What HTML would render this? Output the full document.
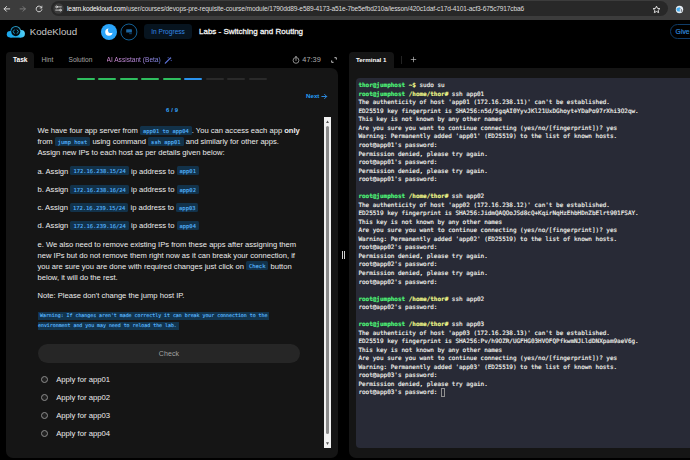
<!DOCTYPE html>
<html lang="en">
<head>
<meta charset="utf-8">
<title>Labs - Switching and Routing</title>
<style>
*{box-sizing:border-box;margin:0;padding:0}
html,body{width:690px;height:460px;overflow:hidden;background:#000}
body{position:relative;font-family:"Liberation Sans",sans-serif;color:#e6e6e6}
.abs{position:absolute;white-space:nowrap}
/* browser chrome */
#chrome{position:absolute;left:0;top:0;width:690px;height:19.5px;background:#3c3c3c}
#urlpill{position:absolute;left:51px;top:1.2px;width:616.6px;height:15px;border-radius:7.5px;background:#282828}
#url{position:absolute;left:67px;top:4.3px;font-size:6.6px;line-height:9px;color:#dedede}
#url b{font-weight:400;color:#fff}
/* header */
#brand{left:29.7px;top:23.6px;font-size:9.7px;line-height:15px;color:#c9c9c9;letter-spacing:0}
.pill{position:absolute;border-radius:4px}
#inprog{left:144.3px;top:24.4px;width:47.5px;height:15px;background:#07141f;border-radius:3.5px;color:#3388e6;font-size:6.6px;line-height:15px;text-align:center}
#title{left:199px;top:25px;font-size:8px;line-height:13px;color:#f6f6f6;font-weight:400;letter-spacing:0;-webkit-text-stroke:.28px #f6f6f6}
#give{position:absolute;left:670px;top:24.4px;width:40px;height:15px;border:.8px solid #0f3c68;border-radius:7.5px;color:#2f86d8;font-size:6.8px;line-height:13.6px;padding-left:4.6px;font-weight:400;-webkit-text-stroke:.2px #2f86d8}
/* left panel */
#ltab{position:absolute;left:6px;top:52px;width:28px;height:18px;background:#151515;border-radius:4px 4px 0 0}
#lpanel{position:absolute;left:6px;top:68px;width:332px;height:390px;background:#151515;border-radius:0 7px 7px 7px}
.tab{font-size:6.6px;line-height:9px;top:55px;color:#a8a8a8}
.seg{position:absolute;top:78.2px;height:2px;width:18px;border-radius:1px}
.p{position:absolute;left:37.5px;white-space:nowrap;font-size:7.6px;line-height:11px;color:#ececec}
code{font-family:"DejaVu Sans Mono","Liberation Mono",monospace;font-size:5.45px;background:#12324a;color:#58b8ff;-webkit-text-stroke:.12px currentColor;padding:1.5px 3px 1.5px 3px;border-radius:1.5px;vertical-align:.6px;letter-spacing:0}
#warn1,#warn2{position:absolute;left:38px;font-family:"DejaVu Sans Mono","Liberation Mono",monospace;font-size:4.92px;line-height:7.8px;height:7.7px;color:#5cbaff;background:#12344d;padding:0 1.5px;white-space:pre;-webkit-text-stroke:.13px currentColor}
#check{position:absolute;left:38px;top:344.4px;width:262px;height:19px;border-radius:9.5px;background:#262626;color:#a2a2a2;font-size:7px;line-height:20.2px;text-align:center;letter-spacing:.1px}
.radio{position:absolute;left:41px;width:7px;height:7px;border-radius:50%;border:1.2px solid #8d8d8d;background:#222}
.rl{position:absolute;left:56.2px;font-size:7.7px;line-height:11px;color:#ececec;white-space:nowrap}
/* scrollbar */
#sbtrack{position:absolute;left:324px;top:116.7px;width:7px;height:331.3px;background:#f1f1f1}
#sbthumb{position:absolute;left:326px;top:126px;width:3px;height:307.5px;background:#8b8b8b;border-radius:1.5px}
/* splitter */
#split{position:absolute;left:342px;top:250.6px;width:3px;height:8px;border-left:1px solid #cfcfcf;border-right:1px solid #cfcfcf}
/* right panel */
#rtab{position:absolute;left:349px;top:52.2px;width:45px;height:18px;background:#151515;border-radius:4px 4px 0 0}
#rpanel{position:absolute;left:349px;top:68px;width:345px;height:390px;background:#151515;border-radius:0 0 0 7px}
#term{position:absolute;left:356px;top:78.4px;width:340px;height:369.6px;background:#282a36;border-radius:4px 0 0 4px}
#term pre{position:absolute;left:2.4px;top:2.9px;font-family:"DejaVu Sans Mono","Liberation Mono",monospace;font-size:5.97px;line-height:8.536px;color:#f8f8f2;-webkit-text-stroke:.14px currentColor;white-space:pre}
.g{color:#50fa7b;font-weight:700}.y{color:#f1fa8c;font-weight:700}
</style>
</head>
<body>
<div id="chrome">
  <div id="urlpill"></div>
  <svg class="abs" style="left:0;top:0" width="52" height="19" viewBox="0 0 52 19">
    <g fill="none" stroke="#d6d6d6" stroke-width="1" stroke-linecap="round" stroke-linejoin="round">
      <path d="M9.7 8.9H4.2M6.5 6.5L4.1 8.9L6.5 11.3"/>
      <path d="M20.1 8.9h5.2M23 6.6l2.3 2.3-2.3 2.3" stroke="#7a7a7a"/>
      <path d="M41.5 7.3A2.9 2.9 0 1 0 41.9 9.7"/>
      <path d="M42.1 6v2.2h-2.2z" fill="#d6d6d6" stroke-width=".3"/>
    </g>
  </svg>
  <svg class="abs" style="left:52.5px;top:3.3px" width="11" height="11" viewBox="0 0 11 11">
    <circle cx="5.5" cy="5.5" r="5.2" fill="#3d3d3d"/>
    <g stroke="#f0f0f0" stroke-width=".75" fill="none" stroke-linecap="round"><path d="M5.2 3.9h3.1M2.7 7.1h3.1"/><circle cx="3.6" cy="3.9" r=".9"/><circle cx="7.4" cy="7.1" r=".9"/></g>
  </svg>
  <div id="url" class="abs"><b style="letter-spacing:-.119px">learn.kodekloud.com</b><span style="letter-spacing:-.104px">/user/courses/devops-pre-requisite-course/module/</span><span style="letter-spacing:-.162px">1790dd89-e589-4173-a51e-7be5efbd210a/lesson/420c1daf-c17d-4101-acf3-675c7917cba6</span></div>
  <svg class="abs" style="left:652.2px;top:4.6px" width="9" height="9" viewBox="0 0 10 10"><path d="M5 1.3l1.150 2.450 2.650.3-1.950 1.8.55 2.650L5 7.2 2.6 8.5l.55-2.650-1.950-1.8 2.650-.3z" fill="none" stroke="#ededed" stroke-width="1" stroke-linejoin="round"/></svg>
  <svg class="abs" style="left:675px;top:4.8px" width="9" height="9" viewBox="0 0 9 9"><circle cx="4.5" cy="4.5" r="3.7" fill="#e6edf3"/><path d="M1.7 5.3a1.7 1.7 0 0 1 1.4-2.6 1.8 1.8 0 0 1 2.3.3L4.6 5l.8 1.4H3A1.5 1.5 0 0 1 1.7 5.3z" fill="#46aef0"/><path d="M5.6 3.6l1.4 1.7-.9.3.5 1.3" fill="none" stroke="#3a3f46" stroke-width=".6"/></svg>
</div>

<!-- header -->
<svg class="abs" style="left:5px;top:23px" width="24" height="18" viewBox="0 0 24 18">
  <defs><linearGradient id="cg" gradientUnits="userSpaceOnUse" x1="2" y1="14" x2="20" y2="6"><stop offset="0" stop-color="#1aa3ea"/><stop offset=".5" stop-color="#22b4ee"/><stop offset="1" stop-color="#63d6f6"/></linearGradient></defs>
  <g fill="url(#cg)">
    <circle cx="10.75" cy="8.4" r="5.4" opacity=".8"/>
    <ellipse cx="5.3" cy="11.3" rx="3.5" ry="3.3"/>
    <ellipse cx="16.3" cy="10.8" rx="3.6" ry="3.8"/>
    <rect x="5.3" y="11" width="10.9" height="3.6"/>
  </g>
  <circle cx="10.75" cy="8.6" r="4.55" fill="#020a10"/>
  <path d="M9.3 7L8.1 8.7 9.3 10.4M12.2 7l1.2 1.7-1.2 1.7" fill="none" stroke="#22b6ea" stroke-width=".8" stroke-linecap="round" stroke-linejoin="round"/>
</svg>
<div id="brand" class="abs">KodeKloud</div>
<svg class="abs" style="left:100px;top:21.6px" width="40" height="20" viewBox="0 0 40 20">
  <defs><mask id="mm"><rect width="40" height="20" fill="#fff"/><circle cx="10.9" cy="8.2" r="2.9" fill="#000"/></mask></defs>
  <circle cx="9" cy="10" r="8" fill="#2aa4f9"/>
  <circle cx="8.9" cy="10.1" r="3.7" fill="#fff" mask="url(#mm)"/>
  <circle cx="28.9" cy="10" r="8" fill="#010203" stroke="#1878bd" stroke-width=".8"/>
  <rect x="26.2" y="7.3" width="5.7" height="3.3" rx=".4" fill="#1d67a3"/>
  <path d="M29.2 11.7h2.6" stroke="#1d67a3" stroke-width=".7"/>
</svg>
<div id="inprog" class="abs">In Progress</div>
<div id="title" class="abs">Labs - Switching and Routing</div>
<div id="give">Give</div>

<!-- left panel -->
<div id="ltab"></div>
<div id="lpanel"></div>
<div class="abs tab" style="left:13px;color:#fff;font-weight:700">Task</div>
<div class="abs tab" style="left:41.5px">Hint</div>
<div class="abs tab" style="left:68.5px">Solution</div>
<div class="abs tab" style="left:106.5px;color:transparent;background:linear-gradient(90deg,#dc92dc 0%,#bd8ee4 55%,#7d8cf0 100%);-webkit-background-clip:text;background-clip:text">AI Assistant (Beta)</div>
<svg class="abs" style="left:163.5px;top:55.5px" width="9" height="9" viewBox="0 0 9 9"><path d="M1.3 7.1l4.5-4.5" stroke="#5c72d8" stroke-width="1.3" stroke-linecap="round"/><path d="M6.4.7l.35 1 .95.350-.95.350-.35 1-.35-1-.95-.35.950-.35z" fill="#6a7fe2"/><path d="M4.2 1.1v1.2M3.6 1.7h1.2M7.3 3.9v1.2M6.7 4.5h1.2" stroke="#4f63c4" stroke-width=".5"/></svg>
<svg class="abs" style="left:290.7px;top:54.6px" width="10" height="10" viewBox="0 0 10 10"><circle cx="5" cy="5.4" r="2.9" fill="none" stroke="#c6c6c6" stroke-width=".7"/><path d="M5 3.5v2M4.4 1.7h1.2" stroke="#c6c6c6" stroke-width=".7" stroke-linecap="round"/></svg>
<div class="abs" style="left:302.3px;top:54.6px;font-size:7.4px;line-height:10px;color:#adadad">47:39</div>
<svg class="abs" style="left:330.6px;top:56.8px" width="6" height="6" viewBox="0 0 7 7"><path d="M4 .8h2.2v2.2M3 6.2H.8V4" fill="none" stroke="#cdcdcd" stroke-width="1.1"/></svg>

<div class="seg" style="left:76.5px;background:#2fbf5f"></div>
<div class="seg" style="left:98px;background:#2fbf5f"></div>
<div class="seg" style="left:119.5px;background:#2fbf5f"></div>
<div class="seg" style="left:141px;background:#2fbf5f"></div>
<div class="seg" style="left:162.5px;background:#2fbf5f"></div>
<div class="seg" style="left:184px;background:#2a93ee"></div>
<div class="seg" style="left:205.5px;background:#2a2a2a"></div>
<div class="seg" style="left:227px;background:#2a2a2a"></div>
<div class="seg" style="left:248.5px;background:#2a2a2a"></div>

<div class="abs" style="left:306px;top:91px;font-size:6.2px;line-height:9px;color:#249cf6;font-weight:700">Next</div>
<svg class="abs" style="left:320.5px;top:92.5px" width="7" height="7" viewBox="0 0 7 7"><path d="M.8 3.5h4.6M3.6 1.4l2.1 2.1-2.1 2.1" fill="none" stroke="#2f95f3" stroke-width=".9" stroke-linecap="round" stroke-linejoin="round"/></svg>
<div class="abs" style="left:166px;top:105.9px;font-size:5.9px;line-height:8px;color:#33a6ff;font-weight:700;letter-spacing:.15px">6 / 9</div>

<div class="p" style="top:125px">We have four app server from <code>app01 to app04</code>. You can access each app <b>only</b></div>
<div class="p" style="top:136.2px">from <code>jump host</code> using command <code>ssh app01</code> and similarly for other apps.</div>
<div class="p" style="top:147.2px">Assign new IPs to each host as per details given below:</div>
<div class="p" style="top:165.5px">a. Assign <code>172.16.238.15/24</code> ip address to <code>app01</code></div>
<div class="p" style="top:183.7px">b. Assign <code>172.16.238.16/24</code> ip address to <code>app02</code></div>
<div class="p" style="top:202px">c. Assign <code>172.16.239.15/24</code> ip address to <code>app03</code></div>
<div class="p" style="top:220.3px">d. Assign <code>172.16.239.16/24</code> ip address to <code>app04</code></div>
<div class="p" style="top:238.5px">e. We also need to remove existing IPs from these apps after assigning them</div>
<div class="p" style="top:249.5px">new IPs but do not remove them right now as it can break your connection, if</div>
<div class="p" style="top:260.5px">you are sure you are done with required changes just click on <code>Check</code> button</div>
<div class="p" style="top:272px">below, it will do the rest.</div>
<div class="p" style="top:289.5px">Note: Please don't change the jump host IP.</div>
<div id="warn1" style="top:312.3px;left:38.2px;padding-left:1.8px">Warning: If changes aren't made correctly it can break your connection to the</div>
<div id="warn2" style="top:322px;left:37.6px;padding:0 2.6px 0 .4px">environment and you may need to reload the lab.</div>
<div id="check">Check</div>
<div class="radio" style="top:376.1px"></div><div class="rl" style="top:374.2px">Apply for app01</div>
<div class="radio" style="top:394.1px"></div><div class="rl" style="top:392.2px">Apply for app02</div>
<div class="radio" style="top:412.1px"></div><div class="rl" style="top:410.2px">Apply for app03</div>
<div class="radio" style="top:430.1px"></div><div class="rl" style="top:428.2px">Apply for app04</div>

<div id="sbtrack"></div><div id="sbthumb"></div>
<svg class="abs" style="left:324px;top:116.7px" width="7" height="9" viewBox="0 0 7 9"><path d="M2 6L3.5 3.4 5 6z" fill="#555"/></svg>
<svg class="abs" style="left:324px;top:439px" width="7" height="9" viewBox="0 0 7 9"><path d="M2 3.3L3.5 5.9 5 3.3z" fill="#555"/></svg>
<div id="split"></div>

<!-- right panel -->
<div id="rtab"></div>
<div id="rpanel"></div>
<div class="abs" style="left:356px;top:55px;font-size:6.2px;line-height:9px;color:#fff;font-weight:700">Terminal 1</div>
<div class="abs" style="left:401px;top:55.5px;width:.9px;height:8px;background:#232323"></div>
<svg class="abs" style="left:409.5px;top:56px" width="7" height="7" viewBox="0 0 7 7"><path d="M3.5 .8v5.4M.8 3.5h5.4" stroke="#bdbdbd" stroke-width=".7"/></svg>
<div id="term"><pre><span class="g">thor@jumphost</span> <span class="y">~$</span> sudo su
<span class="g">root@jumphost</span> <span class="y">/home/thor#</span> ssh app01
The authenticity of host 'app01 (172.16.238.11)' can't be established.
ED25519 key fingerprint is SHA256:n5d/5gqAI0YyvJKl21UxDGhoyt+YDaPo97rXhi3O2qw.
This key is not known by any other names
Are you sure you want to continue connecting (yes/no/[fingerprint])? yes
Warning: Permanently added 'app01' (ED25519) to the list of known hosts.
root@app01's password:
Permission denied, please try again.
root@app01's password:
Permission denied, please try again.
root@app01's password:

<span class="g">root@jumphost</span> <span class="y">/home/thor#</span> ssh app02
The authenticity of host 'app02 (172.16.238.12)' can't be established.
ED25519 key fingerprint is SHA256:JidmQAQOoJSd8cQ+KqirNqHzEhbHDnZbElrt901FSAY.
This key is not known by any other names
Are you sure you want to continue connecting (yes/no/[fingerprint])? yes
Warning: Permanently added 'app02' (ED25519) to the list of known hosts.
root@app02's password:
Permission denied, please try again.
root@app02's password:
Permission denied, please try again.
root@app02's password:

<span class="g">root@jumphost</span> <span class="y">/home/thor#</span> ssh app02
root@app02's password:

<span class="g">root@jumphost</span> <span class="y">/home/thor#</span> ssh app03
The authenticity of host 'app03 (172.16.238.13)' can't be established.
ED25519 key fingerprint is SHA256:Pv/h9OZR/UGFHG03HVOFQPfkwmNJLldDNXpam9aeV6g.
This key is not known by any other names
Are you sure you want to continue connecting (yes/no/[fingerprint])? yes
Warning: Permanently added 'app03' (ED25519) to the list of known hosts.
root@app03's password:
Permission denied, please try again.
root@app03's password: <span style="display:inline-block;width:3.8px;height:8.5px;border:.7px solid #909090;vertical-align:-2.2px"></span></pre></div>
</body>
</html>
